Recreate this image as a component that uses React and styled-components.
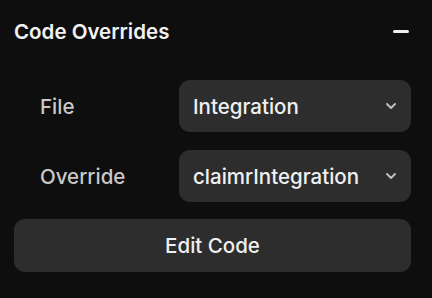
import styled, { createGlobalStyle } from "styled-components";

const Global = createGlobalStyle`
  html, body { margin: 0; padding: 0; background: #0e0e0e; }
  body { font-family: Inter, "Noto Sans", sans-serif; -webkit-font-smoothing: antialiased; }
`;

const Panel = styled.div`
  width: 432px;
  height: 298px;
  box-sizing: border-box;
  background: #0e0e0e;
  padding: 0 21px 0 14px;
  display: flex;
  flex-direction: column;
`;

const Header = styled.div`
  height: 63px;
  display: flex;
  align-items: center;
  justify-content: space-between;
`;

const Title = styled.h2`
  margin: 0;
  color: #f2f2f2;
  font-size: 20.5px;
  font-weight: 600;
`;

const Minus = styled.span`
  display: block;
  width: 16px;
  height: 3px;
  border-radius: 2px;
  background: #f0f0f0;
  margin-right: 2px;
`;

const Row = styled.div`
  display: grid;
  grid-template-columns: 165px 1fr;
  align-items: center;
  margin-top: ${(p) => p.top}px;
`;

const Label = styled.span`
  padding-left: 26px;
  color: #c9c9c9;
  font-size: 20.5px;
  font-weight: 500;
`;

const Select = styled.div`
  height: 52px;
  border-radius: 11px;
  background: #2d2d2d;
  display: flex;
  align-items: center;
  justify-content: space-between;
  padding: 0 14px 0 14px;
  color: #f0f0f0;
  font-size: 20.5px;
  font-weight: 500;
`;

const Button = styled.button`
  margin-top: 17px;
  height: 53px;
  border: 0;
  border-radius: 11px;
  background: #2d2d2d;
  color: #f0f0f0;
  font-family: inherit;
  font-size: 20.5px;
  font-weight: 500;
`;

const Chevron = () => (
  <svg width="12" height="8" viewBox="0 0 12 8" fill="none">
    <path d="M2 2l4 4 4-4" stroke="#bdbdbd" strokeWidth="2" strokeLinecap="round" strokeLinejoin="round" />
  </svg>
);

export default function App() {
  return (
    <Panel>
      <Global />
      <Header>
        <Title>Code Overrides</Title>
        <Minus />
      </Header>
      <Row top={17}>
        <Label>File</Label>
        <Select>
          Integration
          <Chevron />
        </Select>
      </Row>
      <Row top={18}>
        <Label>Override</Label>
        <Select>
          claimrIntegration
          <Chevron />
        </Select>
      </Row>
      <Button>Edit Code</Button>
    </Panel>
  );
}
